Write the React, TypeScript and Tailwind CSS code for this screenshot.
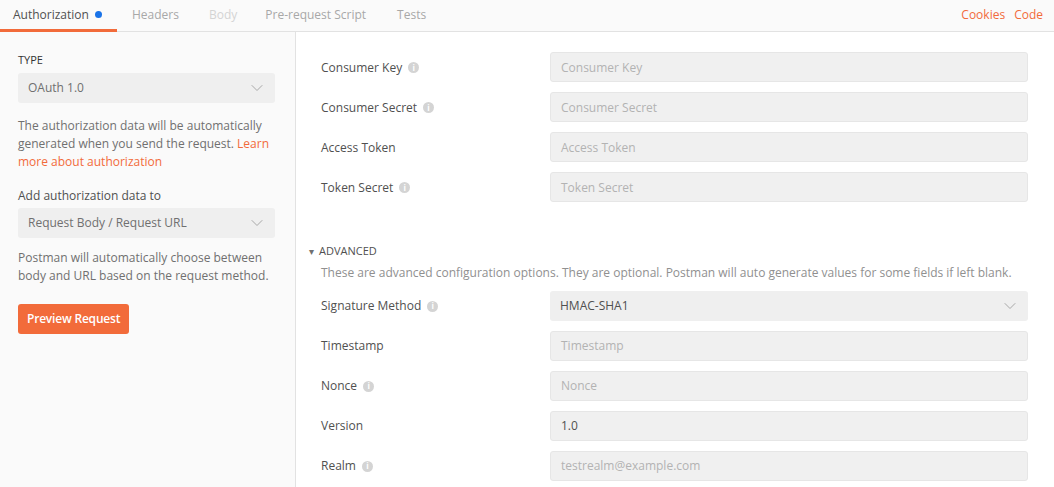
import { ChevronDown } from "lucide-react";

const font = { fontFamily: '"Open Sans", "Noto Sans", sans-serif' };

function Info() {
  return (
    <span className="ml-[6px] inline-flex h-[11px] w-[11px] items-center justify-center rounded-full bg-[#d4d4d4] text-[8px] font-bold leading-none text-white">
      i
    </span>
  );
}

function Field({ label, info, placeholder, value }: { label: string; info?: boolean; placeholder?: string; value?: string }) {
  return (
    <div className="flex h-[30px] items-center">
      <div className="flex w-[229px] items-center pt-[1px] text-[12px] text-[#505050]">
        {label}
        {info && <Info />}
      </div>
      <div className="flex h-[30px] flex-1 items-center rounded-[3px] border border-[#e6e6e6] bg-[#f0f0f0] px-[10px] pt-[1px] text-[12px]">
        {value ? <span className="text-[#505050]">{value}</span> : <span className="text-[#b3b3b3]">{placeholder}</span>}
      </div>
    </div>
  );
}

function Select({ value, className }: { value: string; className?: string }) {
  return (
    <div className={`flex h-[30px] items-center justify-between rounded-[3px] bg-[#efefef] pl-[10px] pr-[8px] text-[12px] ${className ?? ""}`}>
      <span>{value}</span>
      <ChevronDown size={20} strokeWidth={1.2} className="text-[#a8a8a8]" />
    </div>
  );
}

export default function App() {
  return (
    <div className="flex h-[487px] w-[1054px] flex-col bg-white" style={font}>
      {/* Tabs */}
      <div className="flex h-[32px] items-stretch border-b border-[#e2e2e2] bg-[#fafafa] text-[12px]">
        <div className="relative flex w-[117px] items-center pb-[2px] pl-[13px] text-[#505050]">
          Authorization
          <span className="ml-[6px] h-[7px] w-[7px] rounded-full bg-[#1a73e8]" />
          <span className="absolute bottom-[-1px] left-0 h-[3px] w-full bg-[#f26b3a]" />
        </div>
        <div className="flex items-center pb-[2px] pl-[15px] text-[#a8a8a8]">Headers</div>
        <div className="flex items-center pb-[2px] pl-[30px] text-[#d4d4d4]">Body</div>
        <div className="flex items-center pb-[2px] pl-[28px] text-[#a8a8a8]">Pre-request Script</div>
        <div className="flex items-center pb-[2px] pl-[31px] text-[#a8a8a8]">Tests</div>
        <div className="ml-auto flex items-center gap-[9px] pb-[2px] pr-[11px] text-[#f26b3a]">
          <span>Cookies</span>
          <span>Code</span>
        </div>
      </div>

      <div className="flex flex-1">
        {/* Left */}
        <div className="w-[296px] border-r border-[#e2e2e2] bg-[#fafafa] px-[18px] pr-[20px] pt-[21px] text-[12px] text-[#505050]">
          <div className="text-[11px] font-medium leading-[14px] text-[#333]">TYPE</div>
          <Select value="OAuth 1.0" className="mt-[6px] text-[#707070]" />
          <p className="mt-[14px] leading-[18px] text-[#707070]">
            The authorization data will be automatically generated when you send the request.{" "}
            <span className="text-[#f26b3a]">Learn more about authorization</span>
          </p>
          <div className="mt-[16px] leading-[18px]">Add authorization data to</div>
          <Select value="Request Body / Request URL" className="mt-[3px] text-[#707070]" />
          <p className="mt-[11px] leading-[18px] text-[#707070]">
            Postman will automatically choose between body and URL based on the request method.
          </p>
          <button className="mt-[19px] h-[30px] rounded-[3px] bg-[#f26b3a] px-[9px] text-[12px] font-semibold tracking-[-0.2px] text-white">
            Preview Request
          </button>
        </div>

        {/* Right */}
        <div className="flex-1 pl-[25px] pr-[26px] pt-[20px]">
          <div className="flex flex-col gap-[10px]">
            <Field label="Consumer Key" info placeholder="Consumer Key" />
            <Field label="Consumer Secret" info placeholder="Consumer Secret" />
            <Field label="Access Token" placeholder="Access Token" />
            <Field label="Token Secret" info placeholder="Token Secret" />
          </div>
          <div className="mt-[41px] flex items-center text-[11px] text-[#505050]">
            <span className="-ml-[12px] mr-[5px] text-[10px] leading-none text-[#707070]">▾</span>
            ADVANCED
          </div>
          <div className="mt-[4px] text-[12px] text-[#909090]">
            These are advanced configuration options. They are optional. Postman will auto generate values for some fields if left blank.
          </div>
          <div className="mt-[9px] flex flex-col gap-[10px]">
            <div className="flex h-[30px] items-center">
              <div className="flex w-[229px] items-center pt-[1px] text-[12px] text-[#505050]">
                Signature Method
                <Info />
              </div>
              <Select value="HMAC-SHA1" className="flex-1 text-[#505050]" />
            </div>
            <Field label="Timestamp" placeholder="Timestamp" />
            <Field label="Nonce" info placeholder="Nonce" />
            <Field label="Version" value="1.0" />
            <Field label="Realm" info placeholder="testrealm@example.com" />
          </div>
        </div>
      </div>
    </div>
  );
}
